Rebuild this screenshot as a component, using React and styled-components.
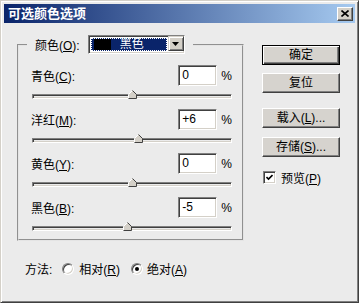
import React from 'react';
import styled, { createGlobalStyle } from 'styled-components';

const FONT = `"Liberation Sans", "Noto Sans CJK SC", sans-serif`;

const Global = createGlobalStyle`
  html, body { margin: 0; padding: 0; background: #ebebeb; }
  body { font-family: ${FONT}; font-size: 12px; color: #000; }
  * { box-sizing: border-box; }
  u { text-decoration: underline; text-underline-offset: 1px; }
`;

const Window = styled.div`
  width: 359px;
  height: 303px;
  background: #ebebeb;
  border: 1px solid;
  border-color: #d4d0c8 #404040 #404040 #d4d0c8;
  box-shadow: inset 1px 1px 0 #fff, inset -1px -1px 0 #808080;
  padding: 3px;
  display: flex;
  flex-direction: column;
`;

const TitleBar = styled.div`
  height: 19px;
  flex: none;
  background: linear-gradient(to right, #0a246a, #a6caf0);
  display: flex;
  align-items: center;
  padding: 0 2px 0 4px;
`;

const TitleText = styled.div`
  flex: 1;
  color: #fff;
  font-weight: bold;
  font-size: 13px;
  line-height: 19px;
`;

const CloseBtn = styled.div`
  width: 16px;
  height: 14px;
  background: #d4d0c8;
  border: 1px solid;
  border-color: #fff #404040 #404040 #fff;
  box-shadow: inset -1px -1px 0 #808080;
  display: flex;
  align-items: center;
  justify-content: center;
`;

const Body = styled.div`
  display: flex;
  padding: 12px 0 0 13px;
`;

const LeftCol = styled.div`
  width: 227px;
  display: flex;
  flex-direction: column;
`;

const Group = styled.fieldset`
  margin: 0;
  width: 227px;
  padding: 11px 10px 8px 12px;
  border: 2px groove #e4e4e4;
  display: flex;
  flex-direction: column;
  gap: 10px;
`;

const Legend = styled.legend`
  padding: 0 8px 0 8px;
  margin-left: -4px;
  display: flex;
  align-items: center;
  height: 19px;
`;

const Label = styled.span`
  white-space: nowrap;
  flex: ${p => (p.$grow ? 1 : 'none')};
`;

const Select = styled.div`
  margin-left: 8px;
  width: 97px;
  height: 19px;
  border: 1px solid;
  border-color: #808080 #fff #fff #808080;
  box-shadow: inset 1px 1px 0 #404040, inset -1px -1px 0 #d4d0c8;
  background: #fff;
  padding: 2px;
  display: flex;
`;

const SelectValue = styled.div`
  flex: 1;
  margin-right: 1px;
  background: #0a246a;
  outline: 1px dotted #fff;
  outline-offset: -1px;
  display: flex;
  align-items: center;
  padding-left: 3px;
`;

const Swatch = styled.div`
  width: 17px;
  height: 11px;
  background: ${p => p.$color};
`;

const SelectText = styled.span`
  flex: 1;
  text-align: center;
  color: #fff;
  font-size: 12px;
  line-height: 15px;
  padding-right: 14px;
`;

const ArrowBtn = styled.div`
  width: 16px;
  height: 15px;
  margin: -2px -2px 0 0;
  background: #d4d0c8;
  border: 1px solid;
  border-color: #d4d0c8 #404040 #404040 #d4d0c8;
  box-shadow: inset 1px 1px 0 #fff, inset -1px -1px 0 #808080;
  display: flex;
  align-items: center;
  justify-content: center;
`;

const Row = styled.div`
  display: flex;
  flex-direction: column;
`;

const TopLine = styled.div`
  display: flex;
  align-items: center;
  height: 21px;
`;

const NumBox = styled.div`
  width: 39px;
  height: 21px;
  background: #fff;
  border: 1px solid;
  border-color: #808080 #fff #fff #808080;
  box-shadow: inset 1px 1px 0 #404040, inset -1px -1px 0 #d4d0c8;
  padding: 0 3px;
  line-height: 19px;
  font-size: 12px;
`;

const Percent = styled.span`
  margin-left: 4px;
`;

const Track = styled.div`
  position: relative;
  margin: 8px 0 0 1px;
  height: 5px;
  border: 1px solid;
  border-color: #808080 #fff #fff #808080;
  box-shadow: inset 1px 1px 0 #404040, inset -1px -1px 0 #d4d0c8;
  background: #ebebeb;
`;

const Thumb = styled.svg`
  position: absolute;
  bottom: -1px;
  width: 9px;
  height: 9px;
  margin-left: -4px;
`;

const MethodRow = styled.div`
  margin-top: 21px;
  padding-left: 8px;
  display: flex;
  align-items: center;
  height: 13px;
`;

const Radio = styled.span`
  width: 12px;
  height: 12px;
  border-radius: 50%;
  background: #fff;
  border: 1px solid;
  border-color: #808080 #fff #fff #808080;
  box-shadow: inset 1px 1px 0 #404040, inset -1px -1px 0 #d4d0c8;
  margin: 0 ${p => p.$gapR}px 0 ${p => p.$gapL}px;
  display: flex;
  align-items: center;
  justify-content: center;
  &::after {
    content: '';
    width: 4px;
    height: 4px;
    border-radius: 50%;
    background: ${p => (p.$checked ? '#000' : 'transparent')};
  }
`;

const RightCol = styled.div`
  margin-left: 18px;
  width: 78px;
  padding-top: 10px;
  display: flex;
  flex-direction: column;
`;

const Btn = styled.div`
  margin-top: ${p => p.$mt || 0}px;
  height: 20px;
  background: #d6d3ce;
  border: 1px solid;
  border-color: ${p => (p.$default ? '#000' : '#fff #404040 #404040 #fff')};
  box-shadow: ${p =>
    p.$default
      ? 'inset 1px 1px 0 #fff, inset -1px -1px 0 #404040, inset -2px -2px 0 #808080'
      : 'inset -1px -1px 0 #808080'};
  display: flex;
  align-items: center;
  justify-content: center;
  font-size: 12px;
  line-height: 16px;
`;

const CheckRow = styled.div`
  margin-top: 12px;
  display: flex;
  align-items: center;
  gap: 5px;
  padding-left: 1px;
`;

const CheckBox = styled.div`
  width: 13px;
  height: 13px;
  background: #fff;
  border: 1px solid;
  border-color: #808080 #fff #fff #808080;
  box-shadow: inset 1px 1px 0 #404040, inset -1px -1px 0 #d4d0c8;
  display: flex;
  align-items: center;
  justify-content: center;
`;

const rows = [
  { name: '青色', key: 'C', value: '0', v: 0 },
  { name: '洋红', key: 'M', value: '+6', v: 6 },
  { name: '黄色', key: 'Y', value: '0', v: 0 },
  { name: '黑色', key: 'B', value: '-5', v: -5 },
];

function SliderThumb({ pct }) {
  return (
    <Thumb viewBox="0 0 9 9" style={{ left: `${pct}%` }}>
      <polygon points="4.5,0.5 8.5,4.5 8.5,8.5 0.5,8.5 0.5,4.5" fill="#d4d0c8" />
      <polyline points="0.5,8 0.5,4.5 4.5,0.5" fill="none" stroke="#fff" />
      <polyline points="4.5,0.5 8.5,4.5 8.5,8.5 0.5,8.5" fill="none" stroke="#404040" />
    </Thumb>
  );
}

export default function App() {
  return (
    <>
      <Global />
      <Window>
        <TitleBar>
          <TitleText>可选颜色选项</TitleText>
          <CloseBtn>
            <svg width="8" height="7" viewBox="0 0 8 7">
              <path d="M0.5 0.5 L7.5 6.5 M7.5 0.5 L0.5 6.5" stroke="#000" strokeWidth="1.6" />
            </svg>
          </CloseBtn>
        </TitleBar>
        <Body>
          <LeftCol>
            <Group>
              <Legend>
                <Label>颜色(<u>O</u>):</Label>
                <Select>
                  <SelectValue>
                    <Swatch $color="#000" />
                    <SelectText>黑色</SelectText>
                  </SelectValue>
                  <ArrowBtn>
                    <svg width="7" height="4" viewBox="0 0 7 4">
                      <polygon points="0,0 7,0 3.5,4" fill="#000" />
                    </svg>
                  </ArrowBtn>
                </Select>
              </Legend>
              {rows.map(r => (
                <Row key={r.key}>
                  <TopLine>
                    <Label $grow>
                      {r.name}(<u>{r.key}</u>):
                    </Label>
                    <NumBox>{r.value}</NumBox>
                    <Percent>%</Percent>
                  </TopLine>
                  <Track>
                    <SliderThumb pct={(r.v + 100) / 2} />
                  </Track>
                </Row>
              ))}
            </Group>
            <MethodRow>
              <Label>方法:</Label>
              <Radio $gapL={10} $gapR={5} />
              <Label>相对(<u>R</u>)</Label>
              <Radio $checked $gapL={11} $gapR={4} />
              <Label>绝对(<u>A</u>)</Label>
            </MethodRow>
          </LeftCol>
          <RightCol>
            <Btn $default>确定</Btn>
            <Btn $mt={8}>复位</Btn>
            <Btn $mt={15}>载入(<u>L</u>)...</Btn>
            <Btn $mt={9}>存储(<u>S</u>)...</Btn>
            <CheckRow>
              <CheckBox>
                <svg width="7" height="7" viewBox="0 0 7 7">
                  <path d="M0.5 3 L2.5 5 L6.5 1" fill="none" stroke="#000" strokeWidth="1.6" />
                </svg>
              </CheckBox>
              <Label>预览(<u>P</u>)</Label>
            </CheckRow>
          </RightCol>
        </Body>
      </Window>
    </>
  );
}
